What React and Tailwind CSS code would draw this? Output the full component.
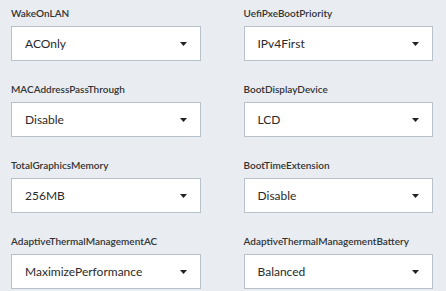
import React from "react";

const fields = [
  ["WakeOnLAN", "ACOnly"],
  ["UefiPxeBootPriority", "IPv4First"],
  ["MACAddressPassThrough", "Disable"],
  ["BootDisplayDevice", "LCD"],
  ["TotalGraphicsMemory", "256MB"],
  ["BootTimeExtension", "Disable"],
  ["AdaptiveThermalManagementAC", "MaximizePerformance"],
  ["AdaptiveThermalManagementBattery", "Balanced"],
];

function Select({ label, value }) {
  return (
    <div className="flex flex-col">
      <div className="h-[26px] text-[10px] font-semibold leading-[26px] text-[#333]">{label}</div>
      <div className="flex h-[35px] items-center justify-between border border-[#b7c2cd] bg-white pl-[13px] pr-[13px]">
        <span className="text-[12px] text-[#2a2a2a]">{value}</span>
        <svg width="7" height="4" viewBox="0 0 7 4" className="mt-[1px]">
          <path d="M0 0H7L3.5 4Z" fill="#222" />
        </svg>
      </div>
    </div>
  );
}

export default function App() {
  return (
    <div
      className="h-[291px] w-[446px] overflow-hidden bg-[#e9edf2] pl-[11px] pr-[13px]"
      style={{ fontFamily: "Lato, 'Open Sans', sans-serif" }}
    >
      <div className="grid grid-cols-2 gap-x-[43px] gap-y-[15px]">
        {fields.map(([label, value]) => (
          <Select key={label} label={label} value={value} />
        ))}
      </div>
    </div>
  );
}
